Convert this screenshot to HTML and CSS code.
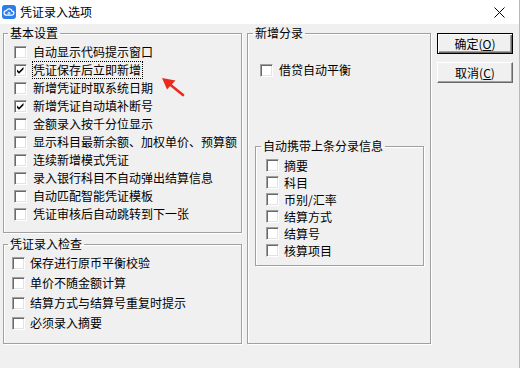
FILE: index.html
```html
<!DOCTYPE html>
<html lang="zh-CN">

<head>
    <meta charset="UTF-8">
    <title>凭证录入选项</title>
    <link rel="stylesheet" href="styles.css">
</head>

<body>
    <div class="window">
        <!-- Title bar -->
        <div class="titlebar">
            <svg class="app-icon" width="14" height="14" viewBox="0 0 14 14">
                <rect x="0" y="0" width="14" height="14" rx="3" fill="#2b7de9"/>
                <path d="M4.2 10.2h5.6a2 2 0 0 0 .2-4 2.9 2.9 0 0 0-5.5-.6 2.3 2.3 0 0 0-.3 4.6z" fill="none" stroke="#fff" stroke-width="1.2"/>
                <circle cx="7" cy="8.2" r="1" fill="none" stroke="#fff" stroke-width="0.9"/>
            </svg>
            <span class="title">凭证录入选项</span>
            <svg class="close" width="11" height="11" viewBox="0 0 11 11">
                <path d="M0.5 0.5l10 10M10.5 0.5l-10 10" stroke="#000" stroke-width="1"/>
            </svg>
        </div>

        <div class="dialog">
            <div class="col-left">
                <fieldset class="group basic">
                    <legend>基本设置</legend>
                    <div class="rows">
                        <div class="opt"><span class="cb"></span><span>自动显示代码提示窗口</span></div>
                        <div class="opt"><span class="cb checked"></span><span class="focus">凭证保存后立即新增</span></div>
                        <div class="opt"><span class="cb"></span><span>新增凭证时取系统日期</span></div>
                        <div class="opt"><span class="cb checked"></span><span>新增凭证自动填补断号</span></div>
                        <div class="opt"><span class="cb"></span><span>金额录入按千分位显示</span></div>
                        <div class="opt"><span class="cb"></span><span>显示科目最新余额、加权单价、预算额</span></div>
                        <div class="opt"><span class="cb"></span><span>连续新增模式凭证</span></div>
                        <div class="opt"><span class="cb"></span><span>录入银行科目不自动弹出结算信息</span></div>
                        <div class="opt"><span class="cb"></span><span>自动匹配智能凭证模板</span></div>
                        <div class="opt"><span class="cb"></span><span>凭证审核后自动跳转到下一张</span></div>
                    </div>
                </fieldset>

                <fieldset class="group check">
                    <legend>凭证录入检查</legend>
                    <div class="rows">
                        <div class="opt"><span class="cb"></span><span>保存进行原币平衡校验</span></div>
                        <div class="opt"><span class="cb"></span><span>单价不随金额计算</span></div>
                        <div class="opt"><span class="cb"></span><span>结算方式与结算号重复时提示</span></div>
                        <div class="opt"><span class="cb"></span><span>必须录入摘要</span></div>
                    </div>
                </fieldset>
            </div>

            <fieldset class="group entry">
                <legend>新增分录</legend>
                <div class="rows">
                    <div class="opt"><span class="cb"></span><span>借贷自动平衡</span></div>
                </div>

                <fieldset class="group carry">
                    <legend>自动携带上条分录信息</legend>
                    <div class="rows">
                        <div class="opt"><span class="cb"></span><span>摘要</span></div>
                        <div class="opt"><span class="cb"></span><span>科目</span></div>
                        <div class="opt"><span class="cb"></span><span>币别/汇率</span></div>
                        <div class="opt"><span class="cb"></span><span>结算方式</span></div>
                        <div class="opt"><span class="cb"></span><span>结算号</span></div>
                        <div class="opt"><span class="cb"></span><span>核算项目</span></div>
                    </div>
                </fieldset>
            </fieldset>

            <div class="buttons">
                <button class="btn default">确定(<u>O</u>)</button>
                <button class="btn">取消(<u>C</u>)</button>
            </div>

            <!-- Red pointer arrow drawn over the dialog -->
            <svg class="pointer" width="26" height="22" viewBox="0 0 26 22">
                <path d="M23 19L10 8.5" stroke="#ea2a1f" stroke-width="2.6" stroke-linecap="round"/>
                <path d="M2 2L15.5 4.5L7 13.5z" fill="#ea2a1f"/>
            </svg>
        </div>
    </div>
</body>

</html>
```

FILE: styles.css
```css
/* Classic dialog look */

* {
    box-sizing: border-box;
}

body {
    margin: 0;
    background-color: #f0f0f0;
    font-family: "Noto Sans CJK SC", "Noto Sans", sans-serif;
    font-size: 12px;
    color: #000;
}

.window {
    width: 520px;
    height: 368px;
    border-right: 1px solid #b9b9b9;
}

.titlebar {
    height: 24px;
    background: #fff;
    display: flex;
    align-items: center;
    padding-left: 2px;
}

.title {
    margin-left: 4px;
    line-height: 14px;
    font-size: 12px;
}

.close {
    margin-left: auto;
    margin-right: 14px;
}

.dialog {
    position: relative;
    display: flex;
    padding: 2px 0 0 3px;
}

.col-left {
    width: 239px;
    display: flex;
    flex-direction: column;
}

/* Etched group boxes */
.group {
    margin: 0;
    padding: 0;
    min-inline-size: 0;
    border: 1px solid #a0a0a0;
    box-shadow: inset 1px 1px 0 #fff, 1px 1px 0 #fff;
}

.group legend {
    padding: 0 2px;
    margin-left: 4px;
    line-height: 14px;
    font-size: 12px;
}

.opt {
    display: flex;
    align-items: center;
    height: 18px;
    line-height: 14px;
    white-space: nowrap;
}

.cb {
    flex: none;
    width: 13px;
    height: 13px;
    margin-right: 6px;
    background: #fff;
    border: 1px solid;
    border-color: #a0a0a0 #fff #fff #a0a0a0;
    box-shadow: inset 1px 1px 0 #696969, inset -1px -1px 0 #e3e3e3;
}

.cb.checked {
    background: #fff url("data:image/svg+xml;utf8,<svg xmlns='http://www.w3.org/2000/svg' width='11' height='11'><path d='M2 4.5l2 2l4.5-4.5v2.2l-4.5 4.5l-2-2z' fill='black'/></svg>") no-repeat 0 0;
}

.focus {
    outline: 1px dotted #000;
    outline-offset: 0;
    padding: 1px 1px 1px 0;
}

.basic .rows {
    padding: 3px 0 9px 10px;
}

.check {
    margin-top: 4px;
}

.check .rows {
    padding: 2px 0 10px 8px;
}

.check .opt {
    height: 20px;
}

.check .cb {
    margin-right: 5px;
}

.entry {
    width: 184px;
    margin-left: 5px;
}

.entry legend {
    margin-left: 5px;
}

.entry > .rows {
    padding: 21px 0 0 12px;
}

.carry {
    margin: 60px 6px 0 7px;
}

.carry .rows {
    padding: 4px 0 6px 10px;
}

.carry .opt {
    height: 17px;
}

.carry .cb {
    margin-right: 5px;
}

.buttons {
    display: flex;
    flex-direction: column;
    gap: 8px;
    margin: 7px 0 0 6px;
}

.btn {
    width: 76px;
    height: 21px;
    padding: 0;
    font-family: inherit;
    font-size: 12px;
    line-height: 14px;
    color: #000;
    background: #f0f0f0;
    border: 1px solid;
    border-color: #fff #696969 #696969 #fff;
    box-shadow: inset -1px -1px 0 #a0a0a0;
}

.btn.default {
    border: 1px solid #000;
    box-shadow: inset 1px 1px 0 #fff, inset -1px -1px 0 #696969, inset -2px -2px 0 #a0a0a0;
}

.btn u {
    text-decoration-thickness: 1px;
}

.pointer {
    position: absolute;
    left: 160px;
    top: 52px;
}
```
